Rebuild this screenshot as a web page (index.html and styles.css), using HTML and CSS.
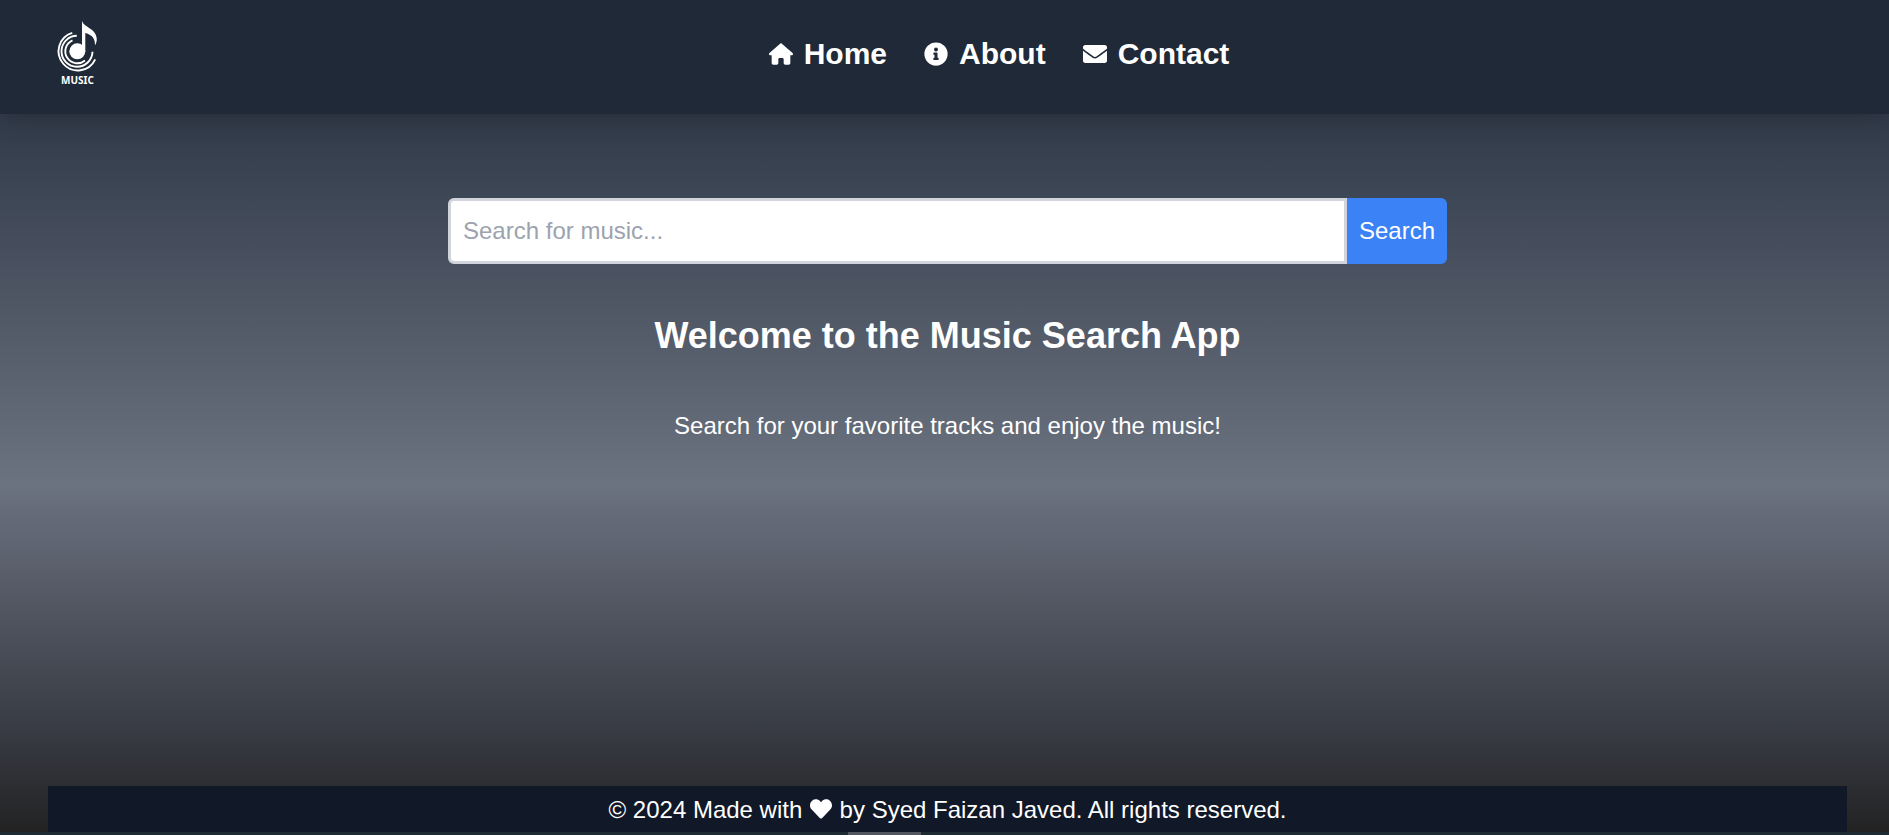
FILE: index.html
```html
<!DOCTYPE html>
<html lang="en">
<head>
<meta charset="utf-8">
<meta name="viewport" content="width=device-width, initial-scale=1">
<title>Music Search App</title>
<link rel="stylesheet" href="styles.css">
</head>
<body>
<div class="page">
  <header class="header">
    <a class="logo" href="#" aria-label="Music">
      <svg class="logo-mark" viewBox="0 0 46 68" aria-hidden="true">
        <circle cx="20.300" cy="33.300" r="8" fill="#fff"/>
        <path d="M25 33.500V3C27 9.500 38 10 39.600 19.500c.5 3-.2 5.500-1.600 8 .3-6.500-2.500-10.500-9.700-12.500V33.500z" fill="#fff"/>
        <g fill="none" stroke="#fff" stroke-width="1.900">
          <path d="M15.500 22.300A12 12 0 1 0 28 42.500"/>
          <path d="M19.800 17.800A15.500 15.500 0 1 0 35.500 33.800"/>
          <path d="M15.300 14.800A19.200 19.200 0 1 0 38.200 41.300"/>
        </g>
        <text class="logo-word" x="20.500" y="66" text-anchor="middle">MUSIC</text>
      </svg>
    </a>
    <nav class="nav">
      <a class="nav-link" href="#"><svg class="icon" viewBox="0 0 576 512" aria-hidden="true"><path d="M575.800 255.500c0 18-15 32.100-32 32.100h-32l.7 160.200c0 2.700-.2 5.400-.5 8.100V472c0 22.100-17.900 40-40 40H392c-22.100 0-40-17.900-40-40v-88c0-17.700-14.300-32-32-32h-64c-17.700 0-32 14.300-32 32v88c0 22.100-17.900 40-40 40h-80c-22.100 0-40-17.900-40-40V287.600H32c-18 0-32-14-32-32.100 0-9 3-17 10-24L266.400 8c7-7 15-8 22-8s15 2 21 7l255.400 224.500c8 7 12 15 11 24z"/></svg>Home</a>
      <a class="nav-link" href="#"><svg class="icon" viewBox="0 0 512 512" aria-hidden="true"><path d="M256 8a248 248 0 1 0 0 496 248 248 0 1 0 0-496zm0 110a42 42 0 1 1 0 84 42 42 0 1 1 0-84zm56 254c0 7-5 12-12 12h-88c-7 0-12-5-12-12v-24c0-7 5-12 12-12h12v-64h-12c-7 0-12-5-12-12v-24c0-7 5-12 12-12h64c7 0 12 5 12 12v100h12c7 0 12 5 12 12v24z"/></svg>About</a>
      <a class="nav-link" href="#"><svg class="icon" viewBox="0 0 512 512" aria-hidden="true"><path d="M502.300 190.800c3.900-3.100 9.700-.2 9.700 4.700V400c0 26.500-21.500 48-48 48H48c-26.500 0-48-21.500-48-48V195.600c0-5 5.700-7.800 9.700-4.700 22.400 17.400 52.100 39.500 154.100 113.600 21.100 15.400 56.700 47.800 92.200 47.600 35.700.3 72-32.800 92.300-47.600 102-74.100 131.600-96.300 154-113.700zM256 320c23.200.4 56.600-29.200 73.400-41.400 132.700-96.300 142.800-104.700 173.400-128.700 5.800-4.500 9.200-11.500 9.200-18.900v-19c0-26.500-21.500-48-48-48H48c-26.500 0-48 21.500-48 48v19c0 7.400 3.400 14.300 9.200 18.900 30.600 23.900 40.700 32.400 173.400 128.700 16.800 12.200 50.200 41.800 73.400 41.400z"/></svg>Contact</a>
    </nav>
  </header>
  <main class="main">
    <form class="search">
      <input class="search-input" type="text" placeholder="Search for music..." aria-label="Search for music">
      <button class="search-button" type="button">Search</button>
    </form>
    <h1 class="title">Welcome to the Music Search App</h1>
    <p class="lead">Search for your favorite tracks and enjoy the music!</p>
  </main>
  <footer class="footer">
    <p class="footer-text">© 2024 Made with <svg class="heart" viewBox="0 0 512 512" aria-hidden="true"><path d="M462.300 62.600C407.500 15.900 326 24.300 275.700 76.200L256 96.500l-19.700-20.300C186.100 24.300 104.500 15.900 49.700 62.600c-62.800 53.600-66.100 149.800-9.900 207.900l193.500 199.800c12.500 12.900 32.800 12.900 45.300 0l193.500-199.800c56.300-58.100 53-154.300-9.800-207.900z"/></svg> by Syed Faizan Javed. All rights reserved.</p>
  </footer>
  <div class="edge"><div class="edge-thumb"></div></div>
</div>
</body>
</html>
```
FILE: styles.css
```css
* {
  box-sizing: border-box;
  margin: 0;
}

body {
  font-family: "Liberation Sans", Arial, sans-serif;
  font-size: 24px;
  line-height: 36px;
  color: #fff;
}

.page {
  display: flex;
  flex-direction: column;
  min-height: 100vh;
  background: linear-gradient(to bottom, #1f2937 0, #6b7280 58%, #373a42 88%, #222 100%);
}

.header {
  display: flex;
  align-items: flex-start;
  min-height: 114px;
  padding: 18px 48px;
  background: #1f2937;
  box-shadow: 0 15px 23px -5px rgba(0, 0, 0, 0.1), 0 6px 9px -6px rgba(0, 0, 0, 0.1);
}

.logo {
  flex: 0 0 109px;
  padding-left: 9px;
}

.logo-mark {
  display: block;
  width: 46px;
  height: 68px;
  overflow: visible;
}

.logo-word {
  font-family: "Noto Sans", sans-serif;
  font-size: 10px;
  font-weight: 700;
  fill: #fff;
}

.nav {
  flex: 1;
  display: flex;
  justify-content: center;
  gap: 37px;
  padding-top: 15px;
}

.nav-link {
  display: flex;
  align-items: center;
  gap: 11px;
  font-size: 30px;
  line-height: 42px;
  font-weight: 700;
  color: #fff;
  text-decoration: none;
}

.icon {
  width: 24px;
  height: 24px;
  fill: currentColor;
}

.main {
  flex: 1;
  display: flex;
  flex-direction: column;
  align-items: center;
  padding: 84px 42px 48px 48px;
}

.search {
  display: flex;
  width: 100%;
  max-width: 999px;
  height: 66px;
}

.search-input {
  flex: 1;
  min-width: 0;
  padding: 0 12px;
  font: inherit;
  color: #111827;
  background: #fff;
  border: 3px solid #d1d5db;
  border-radius: 6px 0 0 6px;
}

.search-input::placeholder {
  color: #9ca3af;
}

.search-button {
  flex: 0 0 100px;
  padding: 0;
  font: inherit;
  color: #fff;
  background: #3b82f6;
  border: 0;
  border-radius: 0 6px 6px 0;
}

.title {
  margin-top: 48px;
  font-size: 36px;
  line-height: 48px;
  font-weight: 700;
}

.lead {
  margin-top: 48px;
}

.footer {
  margin: 0 42px 0 48px;
  padding: 6px 0 4px;
  text-align: center;
  background: #111827;
}

.heart {
  width: 22px;
  height: 22px;
  margin: 0 1px;
  vertical-align: -2px;
  fill: currentColor;
}

.edge {
  height: 3px;
  background: #1f2b33;
}

.edge-thumb {
  width: 73px;
  height: 3px;
  margin-left: calc(45% - 2px);
  background: #52565e;
}
```
